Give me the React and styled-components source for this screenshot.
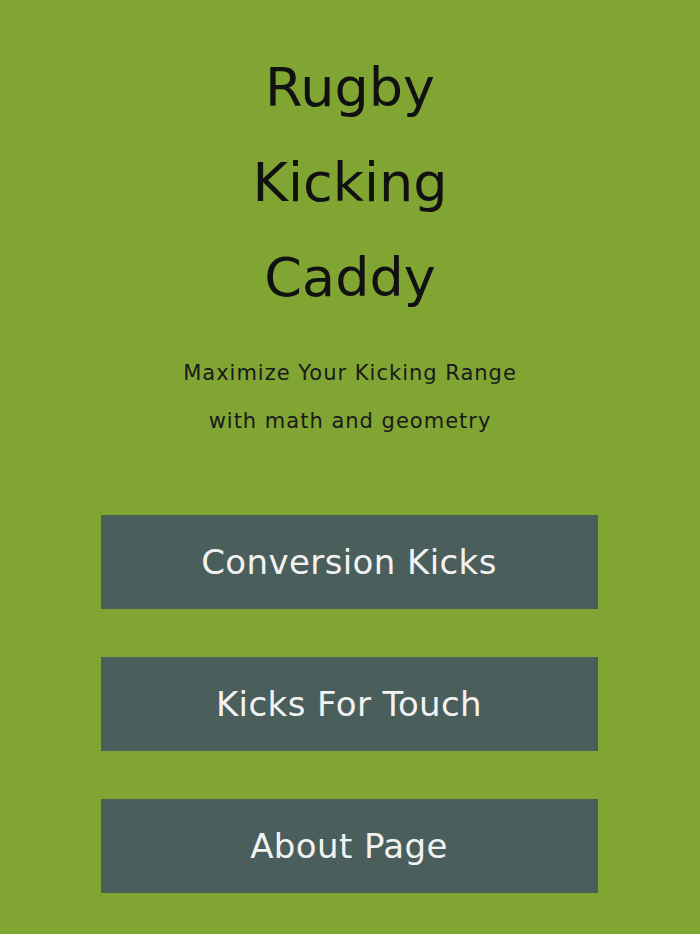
import React from "react"
import styled, { createGlobalStyle } from "styled-components"

const GlobalStyle = createGlobalStyle`
  html, body {
    margin: 0;
    padding: 0;
    background: #80a533;
    font-family: "DejaVu Sans", "Liberation Sans", sans-serif;
  }
`

const Page = styled.div`
  min-height: 934px;
  display: flex;
  flex-direction: column;
  align-items: center;
  padding-top: 40px;
  box-sizing: border-box;
`

const Title = styled.h1`
  margin: 0;
  width: 240px;
  text-align: center;
  font-size: 54px;
  font-weight: normal;
  line-height: 95px;
  color: #111;
`

const Tagline = styled.p`
  margin: 24px 0 0;
  text-align: center;
  font-size: 21px;
  letter-spacing: 1px;
  line-height: 48px;
  color: #1a1a1a;
`

const Menu = styled.nav`
  display: flex;
  flex-direction: column;
  gap: 48px;
  margin-top: 70px;
  margin-right: 2px;
`

const MenuButton = styled.a`
  display: flex;
  align-items: center;
  justify-content: center;
  width: 497px;
  height: 94px;
  background: #4a5e5c;
  color: #f2f2f2;
  font-size: 34px;
  letter-spacing: 0.4px;
  text-decoration: none;
  cursor: pointer;

  :hover {
    opacity: 0.9;
  }
`

export default function App() {
  return (
    <>
      <GlobalStyle />
      <Page>
        <Title>Rugby Kicking Caddy</Title>
        <Tagline>
          Maximize Your Kicking Range
          <br />
          with math and geometry
        </Tagline>
        <Menu>
          <MenuButton href="#conversion">Conversion Kicks</MenuButton>
          <MenuButton href="#touch">Kicks For Touch</MenuButton>
          <MenuButton href="#about">About Page</MenuButton>
        </Menu>
      </Page>
    </>
  )
}
